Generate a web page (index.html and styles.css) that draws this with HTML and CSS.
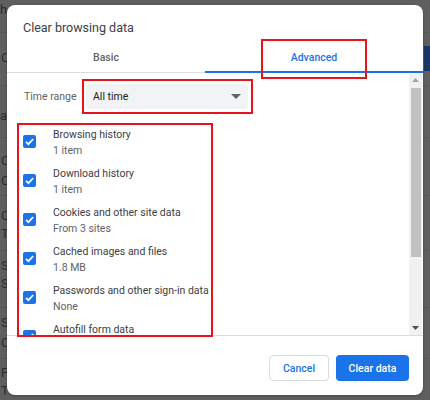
FILE: index.html
```html
<!DOCTYPE html>
<html>
<head>
<meta charset="utf-8">
<link rel="stylesheet" href="styles.css">
</head>
<body>
<div class="page">
  <div class="bg-row r1"><span class="bg-text">h</span></div>
  <div class="bg-row r2"><span class="bg-text">C</span><span class="bg-btn"></span></div>
  <div class="bg-row r3"><span class="bg-text">a</span></div>
  <div class="bg-row r4"><span class="bg-text">C<br>C</span></div>
  <div class="bg-row r5"><span class="bg-text">C<br>T</span></div>
  <div class="bg-row r6"><span class="bg-text">S<br>S</span></div>
  <div class="bg-row r7"><span class="bg-text">S<br>C</span></div>
  <div class="bg-row r8"><span class="bg-text">F<br>T</span></div>
</div>

<div class="dialog">
  <div class="title">Clear browsing data</div>
  <div class="tabs">
    <div class="tab basic">Basic</div>
    <div class="tab active">Advanced</div>
  </div>
  <div class="body">
    <div class="scroll">
      <div class="range-row">
        <span class="range-label">Time range</span>
        <div class="select-mark">
          <div class="select">
            <span>All time</span>
            <svg class="caret" width="10" height="5" viewBox="0 0 10 5"><path d="M0 0h10L5 5z" fill="#5f6368"/></svg>
          </div>
        </div>
      </div>
      <div class="items">
        <div class="item">
          <span class="cb"><svg width="13" height="13" viewBox="0 0 13 13"><path d="M3 6.8l2.4 2.3L10.2 4" fill="none" stroke="#fff" stroke-width="1.8"/></svg></span>
          <div class="item-text"><div class="primary">Browsing history</div><div class="secondary">1 item</div></div>
        </div>
        <div class="item">
          <span class="cb"><svg width="13" height="13" viewBox="0 0 13 13"><path d="M3 6.8l2.4 2.3L10.2 4" fill="none" stroke="#fff" stroke-width="1.8"/></svg></span>
          <div class="item-text"><div class="primary">Download history</div><div class="secondary">1 item</div></div>
        </div>
        <div class="item">
          <span class="cb"><svg width="13" height="13" viewBox="0 0 13 13"><path d="M3 6.8l2.4 2.3L10.2 4" fill="none" stroke="#fff" stroke-width="1.8"/></svg></span>
          <div class="item-text"><div class="primary">Cookies and other site data</div><div class="secondary">From 3 sites</div></div>
        </div>
        <div class="item">
          <span class="cb"><svg width="13" height="13" viewBox="0 0 13 13"><path d="M3 6.8l2.4 2.3L10.2 4" fill="none" stroke="#fff" stroke-width="1.8"/></svg></span>
          <div class="item-text"><div class="primary">Cached images and files</div><div class="secondary">1.8 MB</div></div>
        </div>
        <div class="item">
          <span class="cb"><svg width="13" height="13" viewBox="0 0 13 13"><path d="M3 6.8l2.4 2.3L10.2 4" fill="none" stroke="#fff" stroke-width="1.8"/></svg></span>
          <div class="item-text"><div class="primary">Passwords and other sign-in data</div><div class="secondary">None</div></div>
        </div>
        <div class="item">
          <span class="cb"><svg width="13" height="13" viewBox="0 0 13 13"><path d="M3 6.8l2.4 2.3L10.2 4" fill="none" stroke="#fff" stroke-width="1.8"/></svg></span>
          <div class="item-text"><div class="primary">Autofill form data</div><div class="secondary">&nbsp;</div></div>
        </div>
      </div>
    </div>
    <div class="scrollbar">
      <div class="sb-btn"><svg width="7" height="4" viewBox="0 0 7 4"><path d="M0 4h7L3.5 0z" fill="#a3a3a3"/></svg></div>
      <div class="sb-thumb"></div>
      <div class="sb-btn sb-down"><svg width="7" height="4" viewBox="0 0 7 4"><path d="M0 0h7L3.5 4z" fill="#505050"/></svg></div>
    </div>
  </div>
  <div class="footer">
    <button class="btn cancel">Cancel</button>
    <button class="btn primary-btn">Clear data</button>
  </div>
  <div class="mark tab-mark"></div>
  <div class="mark list-mark"></div>
</div>
</body>
</html>
```
FILE: styles.css
```css
* { box-sizing: border-box; }
html, body {
  margin: 0;
  padding: 0;
  width: 430px;
  height: 400px;
  overflow: hidden;
  background: #5f5f5f;
  font-family: Roboto, "Liberation Sans", sans-serif;
}

/* dimmed background page */
.page {
  display: flex;
  flex-direction: column;
  width: 430px;
}
.bg-row {
  display: flex;
  align-items: flex-start;
  border-bottom: 1px solid #575757;
}
.bg-text {
  font-size: 13px;
  color: #2c2c2c;
  padding-left: 1px;
}
.r1 { height: 33px; padding-top: 2px; }
.r1 .bg-text { line-height: 15px; padding-left: 0; }
.r2 { height: 53px; padding-top: 17px; }
.r2 .bg-text { line-height: 15px; }
.bg-btn {
  margin-left: auto;
  margin-top: -4px;
  width: 6px;
  height: 25px;
  background: #1b3768;
}
.r3 { height: 52px; padding-top: 22px; }
.r3 .bg-text { line-height: 15px; padding-left: 0; }
.r4 { height: 58px; padding-top: 13px; }
.r4 .bg-text { line-height: 20px; }
.r5 { height: 55px; padding-top: 11px; }
.r5 .bg-text { line-height: 18px; }
.r6 { height: 57px; padding-top: 6px; }
.r6 .bg-text { line-height: 18px; }
.r7 { height: 51px; padding-top: 5px; }
.r7 .bg-text { line-height: 20px; }
.r8 { height: 60px; padding-top: 5px; border-bottom: none; }
.r8 .bg-text { line-height: 18px; }

/* dialog */
.dialog {
  position: absolute;
  left: 7px;
  top: 5px;
  width: 416px;
  height: 390px;
  background: #fff;
  border-radius: 8px;
  display: flex;
  flex-direction: column;
  overflow: hidden;
  box-shadow: 0 1px 3px rgba(0,0,0,0.25);
}
.title {
  height: 35px;
  padding: 15px 0 0 16px;
  font-size: 12.5px;
  line-height: 16px;
  color: #3c4043;
}
.tabs {
  display: flex;
  height: 33px;
}
.tab {
  height: 33px;
  display: flex;
  align-items: center;
  justify-content: center;
  font-size: 10.5px;
  font-weight: 500;
  padding-top: 2px;
}
.tab.basic {
  width: 198px;
  color: #5f6368;
  border-bottom: 1px solid #dadce0;
}
.tab.active {
  flex: 1;
  color: #1a73e8;
  border-bottom: 2px solid #1a73e8;
  padding-top: 3px;
}

.body {
  height: 263px;
  display: flex;
  border-bottom: 1px solid #dadce0;
}
.scroll {
  flex: 1;
  overflow: hidden;
}
.range-row {
  display: flex;
  align-items: center;
  margin-top: 6px;
  padding-left: 17px;
}
.range-label {
  font-size: 10.5px;
  color: #5f6368;
  width: 58px;
}
.select-mark {
  border: 2px solid #e8141b;
  padding: 3px 3px 3px 2px;
}
.select {
  width: 162px;
  height: 25px;
  background: #f1f3f4;
  border-radius: 4px;
  display: flex;
  align-items: center;
  justify-content: space-between;
  padding: 0 7px 0 7px;
  font-size: 10.5px;
  color: #202124;
}
.caret { display: block; }

.items {
  margin-top: 10px;
  padding-left: 16px;
  display: flex;
  flex-direction: column;
}
.item {
  height: 39px;
  display: flex;
  align-items: flex-start;
  padding-top: 3px;
}
.cb {
  width: 13px;
  height: 13px;
  margin-top: 8px;
  background: #1a73e8;
  border-radius: 2px;
  display: flex;
}
.item-text {
  margin-left: 17px;
  font-size: 10.5px;
  line-height: 16px;
}
.primary { color: #3c4043; }
.secondary { color: #5f6368; }

.scrollbar {
  width: 13px;
  margin-right: 1px;
  background: #f1f1f1;
  display: flex;
  flex-direction: column;
  align-items: center;
}
.sb-btn {
  height: 14px;
  width: 13px;
  display: flex;
  align-items: center;
  justify-content: center;
}
.sb-thumb {
  width: 10px;
  height: 169px;
  margin-top: 1px;
  margin-left: 1px;
  background: #c1c1c1;
}
.sb-down { margin-top: auto; }

.footer {
  display: flex;
  justify-content: flex-end;
  gap: 7px;
  padding: 19px 14px 0 0;
}
.btn {
  height: 26px;
  border-radius: 4px;
  font-family: Roboto, "Liberation Sans", sans-serif;
  font-size: 10.5px;
  font-weight: 500;
  padding: 0;
}
.cancel {
  width: 60px;
  background: #fff;
  border: 1px solid #dadce0;
  color: #1a73e8;
}
.primary-btn {
  width: 73px;
  background: #1a73e8;
  border: none;
  color: #fff;
}

/* annotation boxes */
.mark {
  position: absolute;
  border: 2px solid #e8141b;
  pointer-events: none;
}
.tab-mark {
  left: 254px;
  top: 34px;
  width: 106px;
  height: 40px;
}
.list-mark {
  left: 10px;
  top: 118px;
  width: 196px;
  height: 214px;
}
```
